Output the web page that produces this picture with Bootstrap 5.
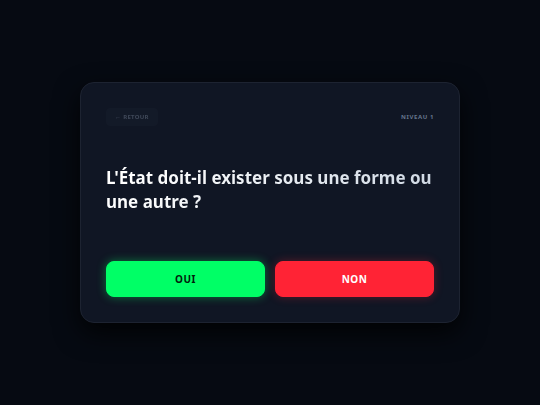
<!DOCTYPE html>
<html lang="fr">
<head>
<meta charset="utf-8">
<meta name="viewport" content="width=device-width, initial-scale=1">
<title>Questionnaire</title>
<link href="https://cdn.jsdelivr.net/npm/bootstrap@5.3.0/dist/css/bootstrap.min.css" rel="stylesheet">
<style>
  body {
    background: #060a12;
    font-family: "Noto Sans", sans-serif;
  }
  .quiz-panel {
    max-width: 380px;
    padding: 25px;
    background: #101624;
    border: 1px solid #1d2331;
    border-radius: 14px;
    box-shadow: 0 10px 26px rgba(0, 0, 0, .8);
  }
  .back-btn {
    --bs-btn-padding-x: 8px;
    --bs-btn-padding-y: 4px;
    --bs-btn-font-size: 6px;
    --bs-btn-font-weight: 700;
    --bs-btn-line-height: 8px;
    --bs-btn-border-radius: 4px;
    --bs-btn-disabled-color: #94a3b8;
    --bs-btn-disabled-bg: #1b2230;
    --bs-btn-disabled-border-color: #1b2230;
    --bs-btn-disabled-opacity: .35;
    letter-spacing: .05em;
  }
  .level-label {
    color: #64748b;
    font-size: 6px;
    line-height: 8px;
    letter-spacing: .1em;
  }
  .question-title {
    margin: 40px 0 47px;
    font-size: 17px;
    line-height: 24px;
    color: transparent;
    background: linear-gradient(135deg, #fff 10%, #cbd5e1);
    -webkit-background-clip: text;
    background-clip: text;
  }
  .answer-grid { gap: 10px; }
  .answer-btn {
    --bs-btn-padding-y: 9px;
    --bs-btn-font-size: 10px;
    --bs-btn-font-weight: 700;
    --bs-btn-line-height: 16px;
    --bs-btn-border-radius: 8px;
    letter-spacing: .05em;
  }
  .answer-yes {
    --bs-btn-color: #02200c;
    --bs-btn-bg: #00ff66;
    --bs-btn-border-color: #00ff66;
    --bs-btn-hover-bg: #33ff85;
    box-shadow: 0 0 10px rgba(0, 255, 102, .4);
  }
  .answer-no {
    --bs-btn-color: #fff;
    --bs-btn-bg: #ff2335;
    --bs-btn-border-color: #ff2335;
    --bs-btn-hover-color: #fff;
    --bs-btn-hover-bg: #ff4655;
    box-shadow: 0 0 10px rgba(255, 35, 53, .3);
  }
</style>
</head>
<body>
<main class="min-vh-100 d-flex align-items-center justify-content-center p-3">
  <section class="quiz-panel w-100">
    <header class="d-flex align-items-center justify-content-between">
      <button type="button" class="btn back-btn" disabled>← RETOUR</button>
      <span class="level-label fw-bold">NIVEAU 1</span>
    </header>
    <h1 class="question-title fw-bold">L'État doit-il exister sous une forme ou une autre ?</h1>
    <div class="answer-grid d-flex">
      <button type="button" class="btn answer-btn answer-yes flex-fill w-50">OUI</button>
      <button type="button" class="btn answer-btn answer-no flex-fill w-50">NON</button>
    </div>
  </section>
</main>
<script src="https://cdn.jsdelivr.net/npm/bootstrap@5.3.0/dist/js/bootstrap.bundle.min.js"></script>
</body>
</html>
